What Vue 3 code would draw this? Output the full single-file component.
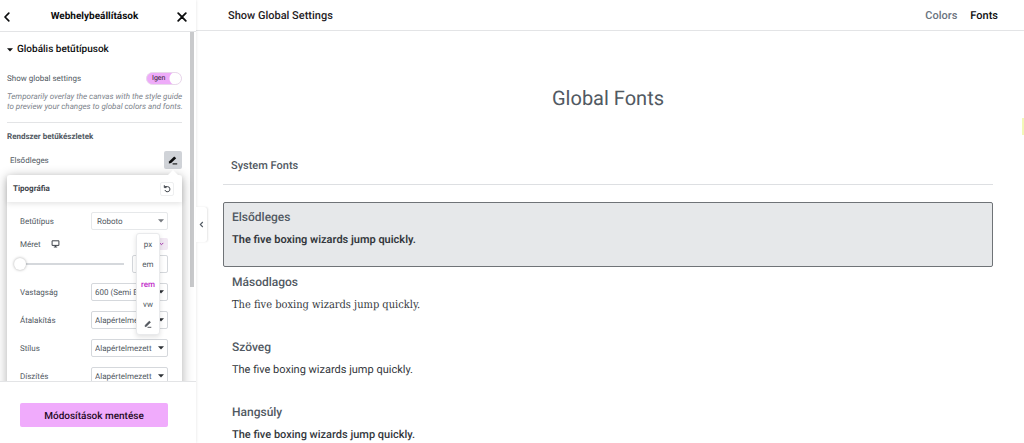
<script setup>
import { ref } from 'vue'

const family = ref('Roboto')
const unit = ref('rem')
const units = ['px', 'em', 'rem', 'vw']
const showGlobal = ref(true)
const size = ref(0)
const sizeText = ref('')
const selects = ref([
  { id: 'weight', label: 'Vastagság', value: '600 (Semi Bold)' },
  { id: 'transform', label: 'Átalakítás', value: 'Alapértelmezett' },
  { id: 'style', label: 'Stílus', value: 'Alapértelmezett' },
  { id: 'decoration', label: 'Díszítés', value: 'Alapértelmezett' },
])
const fonts = [
  { name: 'Elsődleges', kind: 'bold', active: true },
  { name: 'Másodlagos', kind: 'slab' },
  { name: 'Szöveg', kind: 'regular' },
  { name: 'Hangsúly', kind: 'medium' },
]
</script>

<template>
  <div class="app">
    <aside class="panel">
      <header class="panel-head">
        <button class="icon-btn" aria-label="Vissza">
          <svg width="8" height="10" viewBox="0 0 8 10"><path d="M5.8 1.2 2 5l3.8 3.8" fill="none" stroke="#0c0d0e" stroke-width="1.7" stroke-linecap="round" stroke-linejoin="round" /></svg>
        </button>
        <h1>Webhelybeállítások</h1>
        <button class="icon-btn" aria-label="Bezárás">
          <svg width="10" height="10" viewBox="0 0 10 10"><path d="M1.2 1.2l7.6 7.6M8.8 1.2 1.2 8.8" stroke="#0c0d0e" stroke-width="1.8" stroke-linecap="round" /></svg>
        </button>
      </header>

      <div class="panel-body">
        <div class="controls">
          <button class="section-toggle">
            <svg width="6" height="4" viewBox="0 0 6 4"><path d="M0 .3h6L3 3.6z" fill="#0c0d0e" /></svg>
            Globális betűtípusok
          </button>

          <div class="row switch-row">
            <label for="show-global">Show global settings</label>
            <span class="switch">
              <input id="show-global" v-model="showGlobal" type="checkbox" role="switch" />
              <span class="switch-text">Igen</span>
            </span>
          </div>
          <p class="help">Temporarily overlay the canvas with the style guide to preview your changes to global colors and fonts.</p>

          <h2>Rendszer betűkészletek</h2>
          <div class="row font-row">
            <span>Elsődleges</span>
            <button class="edit-btn" aria-label="Szerkesztés">
              <svg width="10" height="10" viewBox="0 0 10 10"><path d="M1 6.6 6.2 1.4 8.2 3.2 3.2 8 .8 8.4z" fill="#0c0d0e" /><path d="M4.6 8.9h4.6" stroke="#0c0d0e" stroke-width="1.1" /></svg>
            </button>
          </div>

          <section class="popover">
            <header class="popover-head">
              <h3>Tipográfia</h3>
              <button class="reset-btn" aria-label="Visszaállítás">
                <svg width="8" height="8" viewBox="0 0 8 8"><path d="M1.6 1.6h2.8a2.6 2.6 0 1 1-2.5 3.4" fill="none" stroke="#3f444b" stroke-width="1" /><path d="M1.3.2v2.4h2.2" fill="none" stroke="#3f444b" stroke-width="1" /></svg>
              </button>
            </header>
            <div class="popover-body">
              <div class="row">
                <label for="family">Betűtípus</label>
                <span class="select family">
                  <select id="family" v-model="family"><option>Roboto</option></select>
                  <svg width="6" height="4" viewBox="0 0 6 4"><path d="M0 .3h6L3 3.6z" fill="#777b80" /></svg>
                </span>
              </div>

              <div class="size">
                <div class="row size-head">
                  <label for="size">Méret</label>
                  <button class="device-btn" aria-label="Asztali gép">
                    <svg width="9" height="8" viewBox="0 0 9 8"><path d="M1.1.8h6.8v4.6H1.1zM2.8 7h3.4M4.5 5.4V7" fill="none" stroke="#3f444b" stroke-width="1" stroke-linejoin="round" /></svg>
                  </button>
                  <button class="unit-btn" aria-label="Mértékegység">
                    <svg width="5" height="4" viewBox="0 0 5 4"><path d="M.7.9 2.5 2.7 4.3.9" fill="none" stroke="#a838b0" stroke-width="1" /></svg>
                  </button>
                  <div class="unit-menu">
                    <button v-for="u in units" :key="u" :class="{ on: u === unit }" @click="unit = u">{{ u }}</button>
                    <button aria-label="Egyéni">
                      <svg width="8" height="8" viewBox="0 0 8 8"><path d="M1.1 5.3 5.3 1.1 6.6 2.3 2.4 6.4 1 6.7z" fill="#565b61" stroke="#3f444b" stroke-width=".4" /><path d="M3.5 7.3h3.8" stroke="#3f444b" stroke-width=".9" /></svg>
                    </button>
                  </div>
                </div>
                <div class="size-inputs">
                  <input id="size" v-model="size" class="slider" type="range" min="0" max="10" />
                  <input v-model="sizeText" class="number" type="text" aria-label="Méret értéke" />
                </div>
              </div>

              <div v-for="s in selects" :key="s.id" class="row">
                <label :for="s.id">{{ s.label }}</label>
                <span class="select">
                  <select :id="s.id" v-model="s.value"><option>{{ s.value }}</option></select>
                  <svg width="6" height="4" viewBox="0 0 6 4"><path d="M0 .3h6L3 3.6z" fill="#2d3136" /></svg>
                </span>
              </div>
            </div>
          </section>
        </div>
        <div class="scroll-track"><div class="scroll-thumb"></div></div>
      </div>

      <footer class="panel-foot">
        <button class="save">Módosítások mentése</button>
      </footer>
      <button class="collapse" aria-label="Panel elrejtése">
        <svg width="5" height="7" viewBox="0 0 5 7"><path d="M3.8 1 1.3 3.5 3.8 6" fill="none" stroke="#515962" stroke-width="1.1" /></svg>
      </button>
    </aside>

    <main class="canvas">
      <header class="canvas-head">
        <strong>Show Global Settings</strong>
        <nav>
          <a href="#colors">Colors</a>
          <a href="#fonts" class="current">Fonts</a>
        </nav>
      </header>
      <div class="guide">
        <h2 class="guide-title">Global Fonts</h2>
        <h3 class="guide-sub">System Fonts</h3>
        <article v-for="f in fonts" :key="f.name" class="font" :class="{ active: f.active }">
          <h4>{{ f.name }}</h4>
          <p :class="f.kind">The five boxing wizards jump quickly.</p>
        </article>
      </div>
    </main>
  </div>
</template>

<style>
body {
  margin: 0;
  overflow: hidden;
}
</style>

<style scoped>
.app {
  display: flex;
  height: 100vh;
  overflow: hidden;
  background: #fff;
  color: #515962;
  font-family: Roboto, "Liberation Sans", sans-serif;
  font-size: 8px;
  text-rendering: geometricPrecision;
}
.app *,
.app *::before,
.app *::after {
  box-sizing: border-box;
}
h1, h2, h3, h4, p {
  margin: 0;
}
button, input, select {
  font: inherit;
  color: inherit;
  text-rendering: inherit;
  margin: 0;
  padding: 0;
  border: 0;
  background: none;
}
svg {
  display: block;
  flex: none;
}

.panel {
  position: relative;
  z-index: 1;
  flex: none;
  width: 196px;
  display: flex;
  flex-direction: column;
  background: #fff;
  box-shadow: 0 0 3px rgba(0, 0, 0, 0.12);
}
.panel-head {
  display: flex;
  align-items: center;
  justify-content: space-between;
  height: 32px;
  flex: none;
  padding: 2px 8px 0 1px;
  border-bottom: 1px solid #e3e4e6;
}
.panel-head h1 {
  font-size: 10px;
  font-weight: 700;
  color: #0c0d0e;
}
.icon-btn {
  display: grid;
  place-items: center;
  width: 12px;
  height: 20px;
}
.panel-body {
  display: flex;
  flex: 1;
  min-height: 0;
  overflow: hidden;
}
.controls {
  flex: 1;
  min-width: 0;
  padding: 0 8px 0 7px;
}
.scroll-track {
  width: 6px;
  flex: none;
  padding-right: 2px;
}
.scroll-thumb {
  height: 73%;
  background: #c9cacc;
}
.section-toggle {
  display: flex;
  align-items: center;
  gap: 4px;
  height: 33px;
  padding-top: 2px;
  font-size: 10px;
  font-weight: 500;
  color: #0c0d0e;
}
.row {
  display: flex;
  align-items: center;
  justify-content: space-between;
}
.switch-row {
  height: 27px;
}
.switch {
  position: relative;
  display: block;
  width: 36px;
  height: 13px;
}
.switch input {
  appearance: none;
  display: block;
  width: 36px;
  height: 13px;
  border: 1px solid #e8d9ea;
  border-radius: 7px;
  background: radial-gradient(circle at 29px 50%, #fff 6px, transparent 7px), #eeabf9;
}
.switch-text {
  position: absolute;
  left: 6px;
  top: 2px;
  line-height: 9px;
  font-size: 7px;
  color: #2c1a30;
  pointer-events: none;
}
.help {
  margin-right: -6px;
  padding-bottom: 10px;
  line-height: 10px;
  font-style: italic;
  color: #7d838b;
}
.controls h2 {
  padding-top: 8px;
  border-top: 1px solid #e3e4e6;
  font-size: 8px;
  line-height: 12px;
  font-weight: 700;
}
.font-row {
  height: 18px;
  margin-top: 8px;
  padding-left: 3px;
}
.edit-btn {
  display: grid;
  place-items: center;
  width: 18px;
  height: 18px;
  border-radius: 2px;
  background: #d0d3d8;
}
.popover {
  position: relative;
  margin-top: 6px;
  border-radius: 3px;
  background: #fff;
  box-shadow: 0 2px 12px rgba(0, 0, 0, 0.32);
}
.popover::before {
  content: "";
  position: absolute;
  right: 4px;
  top: -5px;
  border: 5px solid transparent;
  border-top: 0;
  border-bottom-color: #fff;
}
.popover-head {
  display: flex;
  align-items: center;
  justify-content: space-between;
  height: 27px;
  padding: 0 8px 0 6px;
  box-shadow: 0 2px 5px rgba(0, 0, 0, 0.1);
}
.popover-head h3 {
  font-size: 8px;
  font-weight: 700;
  color: #3f444b;
}
.reset-btn {
  display: grid;
  place-items: center;
  width: 14px;
  height: 14px;
  border: 1px solid #eeeff0;
  border-radius: 2px;
}
.popover-body {
  display: flex;
  flex-direction: column;
  gap: 10px;
  padding: 10px 14px 12px 13px;
}
.select {
  position: relative;
  display: block;
  width: 77px;
}
.select select {
  appearance: none;
  display: block;
  width: 100%;
  height: 18px;
  padding: 0 12px 0 3px;
  border: 1px solid #d5d8dc;
  border-radius: 2px;
  background: #fff;
}
.select.family select {
  border-color: #e6e8ea;
  padding-left: 5px;
}
.select svg {
  position: absolute;
  right: 4px;
  top: 7px;
  pointer-events: none;
}
.size {
  display: flex;
  flex-direction: column;
  gap: 5px;
  margin-top: -2px;
}
.size-head {
  position: relative;
  height: 12px;
}
.device-btn {
  margin: 0 auto 0 10px;
}
.unit-btn {
  display: grid;
  place-items: center;
  width: 13px;
  height: 12px;
  border-radius: 2px;
  background: #f1e8f3;
}
.unit-menu {
  position: absolute;
  z-index: 2;
  right: 8px;
  top: -5px;
  width: 24px;
  display: flex;
  flex-direction: column;
  border: 1px solid #e9eaec;
  border-radius: 3px;
  background: #fff;
  box-shadow: 0 2px 5px rgba(0, 0, 0, 0.12);
}
.unit-menu button {
  display: grid;
  place-items: center;
  height: 20px;
}
.unit-menu .on {
  color: #c02bc9;
  font-weight: 500;
}
.size-inputs {
  display: flex;
  align-items: center;
  gap: 8px;
}
.slider {
  appearance: none;
  flex: 1;
  width: 0;
  min-width: 0;
  height: 12px;
  margin-left: -6px;
  background: linear-gradient(#d5d8dc, #d5d8dc) center / 100% 2px no-repeat;
}
.slider::-webkit-slider-thumb {
  appearance: none;
  width: 12px;
  height: 12px;
  border-radius: 50%;
  background: #fff;
  box-shadow: 0 0 3px rgba(0, 0, 0, 0.35);
}
.number {
  width: 36px;
  height: 18px;
  border: 1px solid #d5d8dc;
  border-radius: 2px;
}
.panel-foot {
  position: relative;
  z-index: 3;
  flex: none;
  padding: 21px 28px 16px 20px;
  border-top: 1px solid #e3e4e6;
  background: #fff;
}
.save {
  display: block;
  width: 100%;
  height: 24px;
  padding-top: 2px;
  border-radius: 2px;
  background: #f0abfc;
  color: #1f0a24;
  font-size: 10px;
  font-weight: 500;
}
.collapse {
  position: absolute;
  left: 100%;
  top: 207px;
  display: grid;
  place-items: center;
  width: 11px;
  height: 35px;
  border-radius: 0 3px 3px 0;
  background: #fff;
  box-shadow: 1px 0 2px rgba(0, 0, 0, 0.1);
}

.canvas {
  flex: 1;
  min-width: 0;
}
.canvas-head {
  display: flex;
  align-items: center;
  justify-content: space-between;
  height: 31px;
  padding: 0 26px 0 32px;
  border-bottom: 1px solid #e3e4e6;
  font-size: 11px;
  font-weight: 500;
}
.canvas-head strong {
  font-weight: 500;
  color: #1f2124;
}
nav {
  display: flex;
  gap: 13px;
}
nav a {
  color: #69727d;
  text-decoration: none;
}
nav .current {
  color: #0c0d0e;
}
.guide {
  position: relative;
  padding: 54px 31px 0 27px;
}
.guide::after {
  content: "";
  position: absolute;
  right: 0;
  top: 87px;
  width: 2px;
  height: 17px;
  background: #f3f8b8;
}
.guide-title {
  font-size: 20px;
  line-height: 26px;
  font-weight: 400;
  text-align: center;
}
.guide-sub {
  margin: 47px 0 17px;
  padding: 0 8px 10px;
  border-bottom: 1px solid #dddfe2;
  font-size: 11px;
  line-height: 16px;
  font-weight: 500;
}
.font {
  height: 65px;
  padding: 7px 8px 0;
  border: 1px solid transparent;
  border-radius: 2px;
}
.font.active {
  border-color: #6f7377;
  background: #e6e8ea;
}
.font h4 {
  font-size: 12px;
  line-height: 14px;
  font-weight: 500;
}
.font p {
  margin-top: 8px;
  font-size: 11px;
  line-height: 16px;
  color: #33373c;
}
.font .bold {
  font-weight: 600;
}
.font .medium {
  font-weight: 500;
}
.font .slab {
  font-family: "Roboto Slab", "DejaVu Serif Condensed", "DejaVu Serif", serif;
}
</style>
